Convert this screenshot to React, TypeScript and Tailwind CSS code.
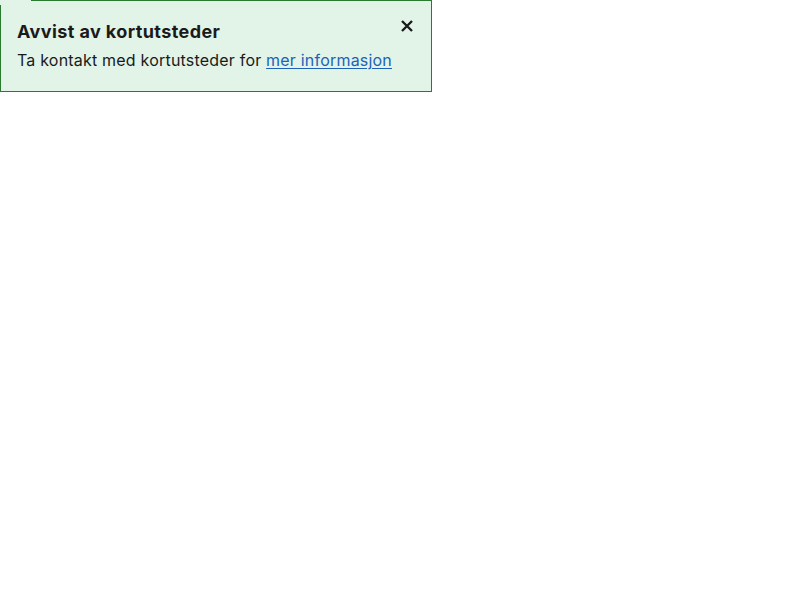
import React from "react";

export default function App() {
  return (
    <div className="relative w-[432px] border border-[#2a7a2f] bg-[#e2f3e8] pl-4 pr-4 pt-[19px] pb-[19px] font-['Inter',sans-serif] text-[#1a1a1a]">
      <div className="absolute left-[-1px] top-[-1px] h-[5px] w-[31px] bg-[#e2f3e8]" />
      <div className="flex items-start justify-between">
        <h2 className="text-[18px] font-bold leading-[24px] tracking-[0.4px]">Avvist av kortutsteder</h2>
        <button className="mt-[-1px] mr-[1px] flex h-[14px] w-[14px] items-center justify-center" aria-label="Lukk">
          <svg width="14" height="14" viewBox="0 0 14 14" fill="none">
            <path d="M2 2L12 12M12 2L2 12" stroke="#1a1a1a" strokeWidth="2.4" strokeLinecap="butt" />
          </svg>
        </button>
      </div>
      <p className="mt-[4px] text-[16px] leading-[24px] tracking-[0.2px]">
        Ta kontakt med kortutsteder for{" "}
        <a href="#" className="text-[#1c62b9] underline underline-offset-2">mer informasjon</a>
      </p>
    </div>
  );
}
